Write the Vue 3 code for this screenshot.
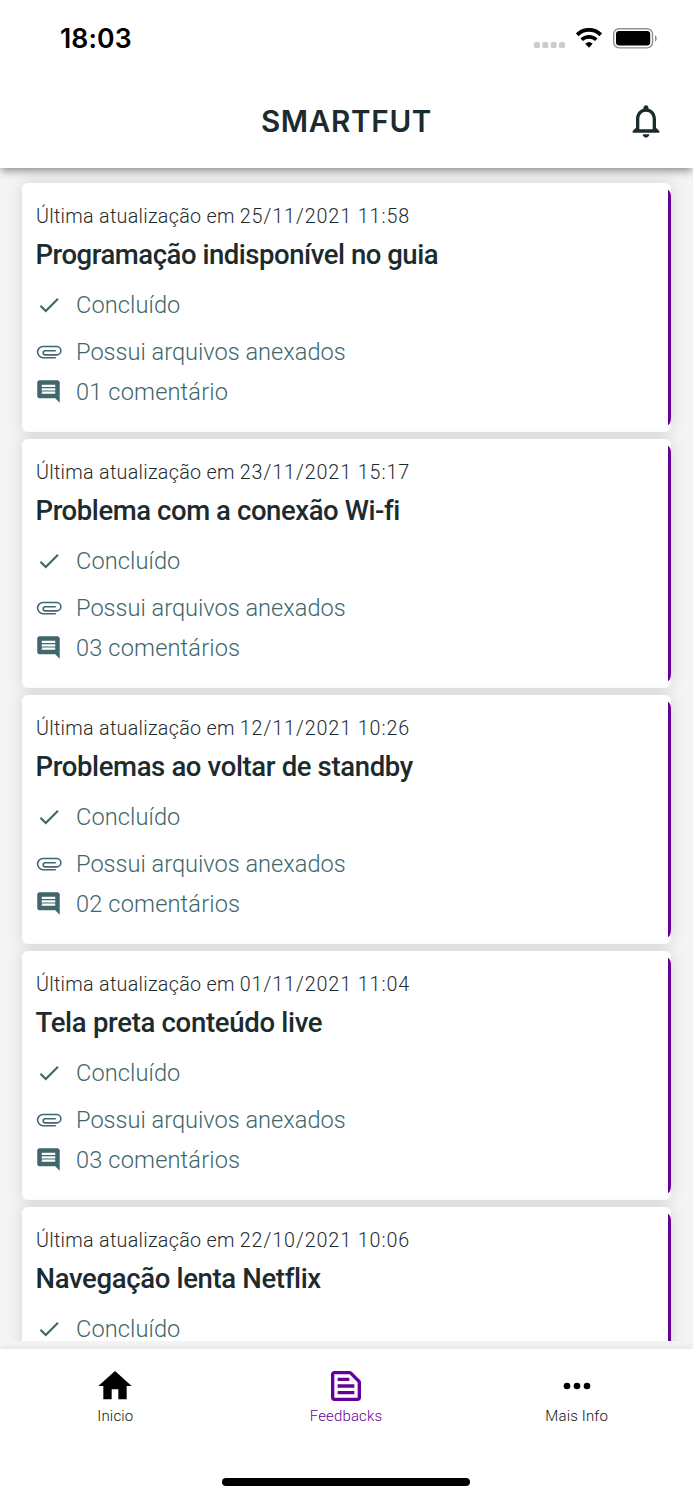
<script setup>
const cards = [
  { date: '25/11/2021 11:58', title: 'Programação indisponível no guia', comments: '01 comentário', key: 'a' },
  { date: '23/11/2021 15:17', title: 'Problema com a conexão Wi-fi', comments: '03 comentários', key: 'b' },
  { date: '12/11/2021 10:26', title: 'Problemas ao voltar de standby', comments: '02 comentários', key: 'c' },
  { date: '01/11/2021 11:04', title: 'Tela preta conteúdo live', comments: '03 comentários', key: 'd' },
  { date: '22/10/2021 10:06', title: 'Navegação lenta Netflix', comments: '', key: 'e' },
]
</script>

<template>
  <div class="screen">
    <header class="top">
      <div class="status">
        <span class="time">18:03</span>
        <div class="indicators">
          <svg class="signal" viewBox="0 0 32 6"><rect x="0" width="6" height="6" rx="1.6" /><rect x="8.3" width="6" height="6" rx="1.6" /><rect x="16.7" width="6" height="6" rx="1.6" /><rect x="25" width="6" height="6" rx="1.6" /></svg>
          <svg class="wifi" viewBox="0 0 26 20">
            <path d="M1.2 6.8A16.6 16.6 0 0 1 24.8 6.8" fill="none" stroke="#000" stroke-width="3.9" />
            <path d="M5.7 11.8A10.4 10.4 0 0 1 20.3 11.8" fill="none" stroke="#000" stroke-width="3.7" />
            <path d="M9.3 15.7A5.6 5.6 0 0 1 16.7 15.7L13 19.7Z" />
          </svg>
          <svg class="battery" viewBox="0 0 44 21">
            <rect x=".7" y=".7" width="38.8" height="19.2" rx="5.4" fill="none" stroke="#8f8f8f" stroke-width="1.4" />
            <rect x="3" y="3" width="34.2" height="14.4" rx="3.2" />
            <path d="M42 7.2c1.1.6 1.7 1.7 1.7 3.2s-.6 2.6-1.7 3.2z" fill="#8f8f8f" />
          </svg>
        </div>
      </div>
      <div class="bar">
        <h1>SMARTFUT</h1>
        <svg class="bell" viewBox="0 0 24 24"><path d="M12 22c1.1 0 2-.9 2-2h-4c0 1.1.9 2 2 2zm6-6v-5c0-3.07-1.63-5.64-4.5-6.32V4c0-.83-.67-1.5-1.5-1.5s-1.5.67-1.5 1.5v.68C7.64 5.36 6 7.92 6 11v5l-2 2v1h16v-1l-2-2zm-2 1H8v-6c0-2.48 1.51-4.5 4-4.5s4 2.02 4 4.5v6z" /></svg>
      </div>
    </header>

    <main class="list">
      <article v-for="c in cards" :key="c.key" class="card">
        <p class="date"><span>Última atualização em</span> <span class="num">{{ c.date }}</span></p>
        <h2 :class="['title', 'title-' + c.key]">{{ c.title }}</h2>
        <div class="row state">
          <svg class="check" viewBox="0 0 24 24"><path d="M9 16.17L4.83 12l-1.42 1.41L9 19 21 7l-1.41-1.41z" /></svg>
          <span class="t-state">Concluído</span>
        </div>
        <template v-if="c.comments">
          <div class="row files">
            <svg class="clip" viewBox="0 0 26 26"><path d="M19.8 18.7H7.2a5.6 5.6 0 0 1 0-11.2H20.6a4.2 4.2 0 0 1 0 8.4H9.3a2.1 2.1 0 0 1 0-4.2H19.8" /></svg>
            <span class="t-files">Possui arquivos anexados</span>
          </div>
          <div class="row notes">
            <svg class="comment" viewBox="0 0 24 24"><path d="M21.99 4c0-1.1-.89-2-1.99-2H4c-1.1 0-2 .9-2 2v12c0 1.1.9 2 2 2h14l4 4-.01-18zM18 14H6v-2h12v2zm0-3H6V9h12v2zm0-3H6V6h12v2z" /></svg>
            <span class="t-notes">{{ c.comments }}</span>
          </div>
        </template>
        <i class="accent"></i>
      </article>
    </main>

    <footer class="bottom">
      <nav class="tabs">
        <div class="tab">
          <svg viewBox="0 0 24 24"><path d="M10 20v-6h4v6h5v-8h3L12 3 2 12h3v8z" /></svg>
          <span>Inicio</span>
        </div>
        <div class="tab active">
          <svg viewBox="0 0 24 24"><path d="M20.41 8.41l-4.83-4.83c-.37-.37-.88-.58-1.41-.58H5c-1.1 0-2 .9-2 2v14c0 1.1.9 2 2 2h14c1.1 0 2-.9 2-2V9.83c0-.53-.21-1.04-.59-1.42zM19 19H5V5h9.17L19 9.83V19zM7 7h7v2H7V7zm0 8h10v2H7v-2zm0-4h10v2H7v-2z" fill-rule="evenodd" /></svg>
          <span>Feedbacks</span>
        </div>
        <div class="tab">
          <svg viewBox="0 0 24 24"><circle cx="6" cy="12" r="2" /><circle cx="12" cy="12" r="2" /><circle cx="18" cy="12" r="2" /></svg>
          <span>Mais Info</span>
        </div>
      </nav>
      <div class="home-bar"></div>
    </footer>
  </div>
</template>

<style>
body {
  margin: 0;
}
</style>

<style scoped>
.screen {
  width: 693px;
  height: 1500px;
  overflow: hidden;
  display: flex;
  flex-direction: column;
  background: #f4f4f4;
  font-family: Roboto, "Liberation Sans", sans-serif;
}
svg {
  display: block;
  flex: none;
}
.top {
  position: relative;
  z-index: 1;
  flex: none;
  height: 167.5px;
  box-sizing: border-box;
  background: #fff;
  box-shadow: 0 4px 8px -1px rgba(0, 0, 0, 0.42);
}
.status {
  height: 76px;
  padding: 0 36px 0 60px;
  display: flex;
  align-items: center;
  justify-content: space-between;
  box-sizing: border-box;
}
.time {
  font: 600 26.6px/36px Inter, sans-serif;
  letter-spacing: 0.1px;
  color: #000;
}
.indicators {
  display: flex;
  align-items: center;
}
.signal {
  width: 32px;
  height: 6px;
  margin: 14px 10px 0 0;
  fill: #ccc;
}
.wifi {
  width: 26px;
  height: 20px;
  margin-right: 11px;
}
.battery {
  width: 44px;
  height: 21px;
}
.bar {
  height: 90px;
  padding: 0 27px;
  display: grid;
  grid-template-columns: 40px 1fr 40px;
  align-items: center;
}
h1 {
  grid-column: 2;
  margin: 0;
  text-align: center;
  font: 600 29.6px/40px Inter, sans-serif;
  letter-spacing: 0.7px;
  color: #1c2b2e;
}
.bell {
  width: 40px;
  height: 40px;
  fill: #1c2b2e;
}
.list {
  flex: none;
  height: 1173.5px;
  box-sizing: border-box;
  padding: 15.5px 22px 0;
  overflow: hidden;
  display: flex;
  flex-direction: column;
  gap: 7px;
}
.card {
  position: relative;
  flex: none;
  height: 249px;
  box-sizing: border-box;
  padding: 21px 14px 0;
  background: #fff;
  border-radius: 6px;
  box-shadow: 0 0 16px rgba(0, 0, 0, 0.13);
}
.accent {
  position: absolute;
  right: 0;
  top: 7px;
  bottom: 7px;
  width: 3.5px;
  background: #609;
  border-radius: 0 3.5px 3.5px 0 / 0 9px 9px 0;
}
.date {
  margin: 0;
  font-size: 19.7px;
  line-height: 26px;
  font-weight: 350;
  letter-spacing: 0.3px;
  color: #1c2b2e;
  white-space: nowrap;
}
.num {
  letter-spacing: 0.92px;
}
.title {
  width: max-content;
  margin: 8px 0 0 -0.5px;
  font-size: 27.5px;
  line-height: 34px;
  font-weight: 500;
  color: #1c2b2e;
  white-space: nowrap;
}
.title-a {
  letter-spacing: -0.47px;
}
.title-b {
  letter-spacing: -0.42px;
}
.title-c {
  letter-spacing: -0.36px;
}
.title-d {
  letter-spacing: -0.3px;
}
.title-e {
  letter-spacing: -0.34px;
}
.row {
  display: flex;
  align-items: center;
  height: 30px;
  font-size: 23.6px;
  line-height: 30px;
  font-weight: 350;
  color: #41666c;
  fill: #41666c;
}
.row span {
  margin-left: 14px;
  white-space: nowrap;
}
.state {
  margin-top: 18px;
}
.t-state {
  letter-spacing: 0.1px;
}
.files {
  margin-top: 17px;
}
.notes {
  margin-top: 10px;
}
.t-notes {
  letter-spacing: 0.15px;
}
.check,
.clip {
  width: 26px;
  height: 26px;
}
.clip path {
  fill: none;
  stroke: #41666c;
  stroke-width: 1.6;
}
.comment {
  width: 27px;
  height: 27px;
  margin: -2px 0 0 -1px;
}
.bottom {
  margin-top: 8px;
  flex: 1;
  background: #fff;
  box-shadow: 0 0 8px rgba(0, 0, 0, 0.1);
  display: flex;
  flex-direction: column;
  align-items: center;
}
.tabs {
  width: 692px;
  margin-right: 1px;
  height: 129px;
  padding-top: 17px;
  box-sizing: border-box;
  display: grid;
  grid-template-columns: repeat(3, 1fr);
}
.tab {
  display: flex;
  flex-direction: column;
  align-items: center;
  font-size: 15px;
  line-height: 20px;
  font-weight: 350;
  letter-spacing: 0.15px;
  color: #111;
}
.tab svg {
  width: 40px;
  height: 40px;
}
.active {
  color: #609;
  fill: #609;
}
.home-bar {
  width: 248px;
  height: 8px;
  margin-right: 1px;
  border-radius: 4px;
  background: #000;
}
</style>
